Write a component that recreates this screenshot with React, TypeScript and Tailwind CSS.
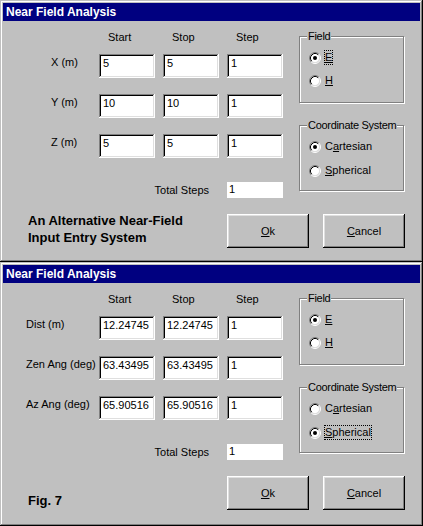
import type { ReactNode } from "react";

type Row = { label: string; start: string; stop: string; step: string };

const SUNKEN =
    "shadow-[inset_-1px_-1px_#fff,inset_1px_1px_#808080,inset_-2px_-2px_#dfdfdf,inset_2px_2px_#000]";
const RAISED =
    "shadow-[inset_-1px_-1px_#000,inset_1px_1px_#fff,inset_-2px_-2px_#808080,inset_2px_2px_#dfdfdf]";

function Radio({ checked }: { checked?: boolean }) {
    return (
        <svg width="12" height="12" viewBox="0 0 12 12" className="shrink-0">
            <circle cx="6" cy="6" r="4.5" fill="#fff" />
            <path d="M2.11 9.89A5.5 5.5 0 0 1 9.89 2.11" fill="none" stroke="#808080" />
            <path d="M9.89 2.11A5.5 5.5 0 0 1 2.11 9.89" fill="none" stroke="#fff" />
            <path d="M2.82 9.18A4.5 4.5 0 0 1 9.18 2.82" fill="none" stroke="#000" />
            <path d="M9.18 2.82A4.5 4.5 0 0 1 2.82 9.18" fill="none" stroke="#dfdfdf" />
            {checked && <circle cx="6" cy="6" r="2" fill="#000" />}
        </svg>
    );
}

function Option({ checked, focused, children }: { checked?: boolean; focused?: boolean; children: ReactNode }) {
    return (
        <div className="flex h-[13px] items-center gap-[4px] leading-[13px]">
            <Radio checked={checked} />
            <span className={focused ? "outline-1 outline-dotted outline-black" : ""}>{children}</span>
        </div>
    );
}

function GroupBox({ title, className, children }: { title: string; className: string; children: ReactNode }) {
    return (
        <div
            className={`relative border border-[#808080] shadow-[inset_1px_1px_#fff,1px_1px_#fff] ${className}`}
        >
            <span className="absolute -top-[7px] left-[7px] whitespace-nowrap bg-[#c0c0c0] px-[1px] leading-[13px] tracking-[-0.3px]">
                {title}
            </span>
            {children}
        </div>
    );
}

function Field({ value }: { value: string }) {
    return (
        <div className={`h-[24px] w-[56px] bg-white pl-[4px] pt-[3px] leading-[13px] ${SUNKEN}`}>{value}</div>
    );
}

function Button({ children }: { children: ReactNode }) {
    return (
        <div className={`flex h-[34px] w-[82px] items-center justify-center leading-[13px] ${RAISED}`}>
            {children}
        </div>
    );
}

function Dialog({
    rows,
    labelPad,
    spherical,
    footer,
    height,
}: {
    rows: Row[];
    labelPad: string;
    spherical?: boolean;
    footer: ReactNode;
    height: string;
}) {
    return (
        <div
            className={`flex flex-col bg-[#c0c0c0] p-[3px] shadow-[inset_-1px_-1px_#000,inset_1px_1px_#c0c0c0,inset_-2px_-2px_#808080,inset_2px_2px_#fff] ${height}`}
        >
            {/* title bar */}
            <div className="flex h-[18px] items-center bg-[#000080] pl-[3px] text-[12px] font-bold text-white">
                Near Field Analysis
            </div>

            <div className="flex flex-col pt-[10px]">
                <div className="flex items-start">
                    {/* inputs */}
                    <div className="flex w-[280px] flex-col">
                        <div className="flex h-[13px] leading-[13px]">
                            <div className="w-[96px]" />
                            <div className="flex gap-[8px]">
                                <span className="w-[56px] pl-[9px]">Start</span>
                                <span className="w-[56px] pl-[9px]">Stop</span>
                                <span className="w-[56px] pl-[9px]">Step</span>
                            </div>
                        </div>
                        <div className="mt-[10px] flex flex-col gap-[16px]">
                            {rows.map((r) => (
                                <div key={r.label} className="flex">
                                    <span className={`w-[96px] whitespace-nowrap pt-[2px] leading-[13px] ${labelPad}`}>
                                        {r.label}
                                    </span>
                                    <div className="flex gap-[8px]">
                                        <Field value={r.start} />
                                        <Field value={r.stop} />
                                        <Field value={r.step} />
                                    </div>
                                </div>
                            ))}
                        </div>
                        <div className="mt-[24px] flex items-center">
                            <span className="w-[224px] pr-[18px] text-right leading-[13px]">Total Steps</span>
                            <div className="h-[16px] w-[56px] bg-white pl-[2px] pt-[1px] leading-[13px]">1</div>
                        </div>
                    </div>

                    {/* option groups */}
                    <div className="ml-[16px] flex w-[105px] flex-col">
                        <GroupBox title="Field" className="mt-[5px] h-[67px]">
                            <div className="flex flex-col gap-[10px] pl-[9px] pt-[14px]">
                                <Option checked focused={!spherical}>
                                    <u>E</u>
                                </Option>
                                <Option>
                                    <u>H</u>
                                </Option>
                            </div>
                        </GroupBox>
                        <GroupBox title="Coordinate System" className="mt-[22px] h-[66px]">
                            <div className="flex flex-col gap-[11px] pl-[9px] pt-[14px]">
                                <Option checked={!spherical}>
                                    C<u>a</u>rtesian
                                </Option>
                                <Option checked={spherical} focused={spherical}>
                                    <u>S</u>pherical
                                </Option>
                            </div>
                        </GroupBox>
                    </div>
                </div>

                <div className="mt-[16px] flex items-start">
                    <div className="w-[224px] pl-[25px] text-[13px] font-bold leading-[17px]">{footer}</div>
                    <div className="flex gap-[14px]">
                        <Button>
                            <u>O</u>k
                        </Button>
                        <Button>
                            <u>C</u>ancel
                        </Button>
                    </div>
                </div>
            </div>
        </div>
    );
}

export default function App() {
    return (
        <div className="flex w-[423px] flex-col font-['Liberation_Sans',Arial,sans-serif] text-[11px] text-black">
            <Dialog
                height="h-[262px]"
                labelPad="pl-[48px]"
                rows={[
                    { label: "X (m)", start: "5", stop: "5", step: "1" },
                    { label: "Y (m)", start: "10", stop: "10", step: "1" },
                    { label: "Z (m)", start: "5", stop: "5", step: "1" },
                ]}
                footer={
                    <div className="-mt-[2px]">
                        An Alternative Near-Field
                        <br />
                        Input Entry System
                    </div>
                }
            />
            <Dialog
                height="h-[264px]"
                labelPad="pl-[23px]"
                spherical
                rows={[
                    { label: "Dist (m)", start: "12.24745", stop: "12.24745", step: "1" },
                    { label: "Zen Ang (deg)", start: "63.43495", stop: "63.43495", step: "1" },
                    { label: "Az Ang (deg)", start: "65.90516", stop: "65.90516", step: "1" },
                ]}
                footer={<div className="mt-[16px]">Fig. 7</div>}
            />
        </div>
    );
}
